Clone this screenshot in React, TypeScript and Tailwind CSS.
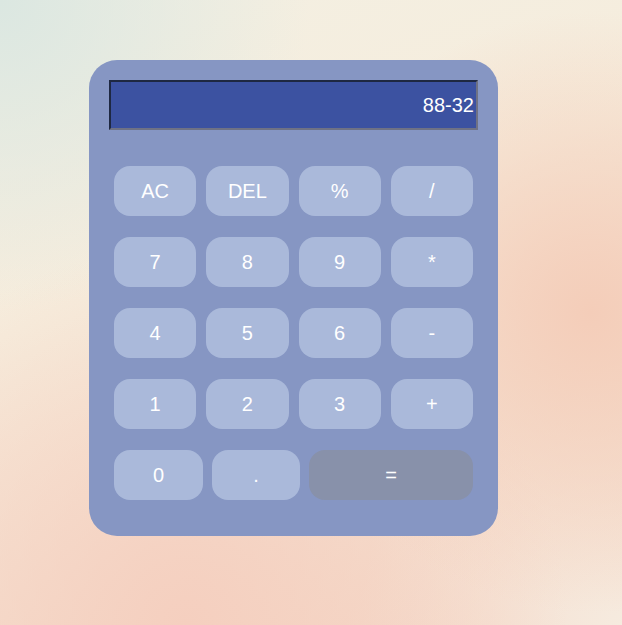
export default function App() {
  const rows = [
    ["AC", "DEL", "%", "/"],
    ["7", "8", "9", "*"],
    ["4", "5", "6", "-"],
    ["1", "2", "3", "+"],
  ];
  const btn =
    "h-[50px] rounded-[16px] bg-[#aab9da] text-white text-[20px] flex items-center justify-center";
  return (
    <div
      className="w-[622px] h-[625px] overflow-hidden pt-[60px] pl-[89px]"
      style={{
        fontFamily: '"Liberation Sans", Arial, sans-serif',
        background:
          "radial-gradient(circle at 0% 0%, #dbe7e1 0%, rgba(219,231,225,0) 35%), radial-gradient(circle at 95% 50%, #f4cdb9 0%, rgba(244,205,185,0) 45%), radial-gradient(circle at 30% 100%, #f5cfbf 0%, rgba(245,207,191,0) 50%), radial-gradient(circle at 100% 100%, #f6ebdf 0%, rgba(246,235,223,0) 30%), linear-gradient(160deg, #f3f0e3 0%, #f6ecdc 40%, #f4d6c6 100%)",
      }}
    >
      <div className="w-[409px] h-[476px] rounded-[28px] bg-[#8696c3] px-[20px] pt-[20px]">
        <div className="h-[50px] border-2 border-t-[#1e2842] border-l-[#1e2842] border-b-[#6f7285] border-r-[#6f7285] bg-[#3c52a1] flex items-center justify-end pr-[2px] text-white text-[20px]">
          88-32
        </div>
        <div className="px-[5px] pt-[36px] flex flex-col gap-[21px]">
          {rows.map((r, i) => (
            <div key={i} className="grid grid-cols-4 gap-[10px]">
              {r.map((k) => (
                <div key={k} className={btn}>
                  {k}
                </div>
              ))}
            </div>
          ))}
          <div className="flex gap-[9px]">
            <div className={btn + " w-[89px]"}>0</div>
            <div className={btn + " w-[88px]"}>.</div>
            <div className="h-[50px] flex-1 rounded-[16px] bg-[#8891aa] text-white text-[20px] flex items-center justify-center">
              =
            </div>
          </div>
        </div>
      </div>
    </div>
  );
}
